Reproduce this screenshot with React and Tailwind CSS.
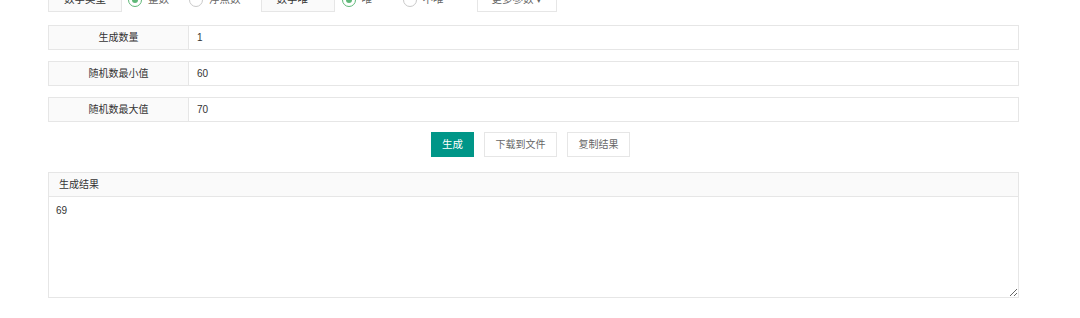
import React from "react";

const font = { fontFamily: '"Liberation Sans", "Noto Sans CJK SC", sans-serif' };

const Radio = ({ checked, label }) => (
  <div className="flex items-center gap-[6px] pr-[20px]">
    <span
      className={
        "w-[14px] h-[14px] rounded-full border flex items-center justify-center " +
        (checked ? "border-[#5fb878]" : "border-[#c9c9c9]")
      }
    >
      {checked && <span className="w-[6px] h-[6px] rounded-full bg-[#5fb878]" />}
    </span>
    <span className="text-[10.5px] text-[#666]">{label}</span>
  </div>
);

const Field = ({ label, value }) => (
  <div className="flex h-[25px] border border-[#e6e6e6]">
    <div className="w-[140px] shrink-0 bg-[#fafafa] border-r border-[#e6e6e6] flex items-center justify-center text-[10px] text-[#333]">
      {label}
    </div>
    <div className="flex-1 flex items-center pl-[8px] text-[10px] text-[#333]">{value}</div>
  </div>
);

export default function App() {
  return (
    <div className="w-[1080px] h-[318px] bg-white overflow-hidden" style={font}>
      <div className="ml-[48px] w-[971px]">
        <div className="flex items-center h-[25px] -mt-[13px]">
          <div className="w-[74px] h-full bg-[#fafafa] border border-[#e6e6e6] flex items-center justify-center text-[10.5px] text-[#333]">
            数字类型
          </div>
          <div className="flex items-center pl-[6px]">
            <Radio checked label="整数" />
            <Radio label="浮点数" />
          </div>
          <div className="w-[74px] h-full bg-[#fafafa] border border-[#e6e6e6] flex items-center justify-center text-[10.5px] text-[#333]">
            数字唯一
          </div>
          <div className="flex items-center pl-[7px]">
            <Radio checked label="唯一" />
            <Radio label="不唯一" />
          </div>
          <div className="ml-[3px] w-[80px] h-full border border-[#e6e6e6] flex items-center justify-center text-[10.5px] text-[#666]">
            更多参数 ▾
          </div>
        </div>

        <div className="mt-[13px] flex flex-col gap-[11px]">
          <Field label="生成数量" value="1" />
          <Field label="随机数最小值" value="60" />
          <Field label="随机数最大值" value="70" />
        </div>

        <div className="mt-[10px] flex justify-center gap-[10px] pr-[6px]">
          <button className="w-[43px] h-[25px] bg-[#009688] text-white text-[10.5px]">生成</button>
          <button className="w-[73px] h-[25px] border border-[#e6e6e6] bg-white text-[#666] text-[10px]">
            下载到文件
          </button>
          <button className="w-[63px] h-[25px] border border-[#e6e6e6] bg-white text-[#666] text-[10px]">
            复制结果
          </button>
        </div>

        <div className="mt-[15px] border border-[#e6e6e6]">
          <div className="h-[24px] bg-[#fafafa] border-b border-[#e6e6e6] flex items-center pl-[10px] text-[10px] text-[#333]">
            生成结果
          </div>
          <textarea
            className="block w-full h-[100px] px-[7px] py-[6px] text-[10px] text-[#333] outline-none resize-y"
            style={font}
            defaultValue="69"
          />
        </div>
      </div>
    </div>
  );
}
